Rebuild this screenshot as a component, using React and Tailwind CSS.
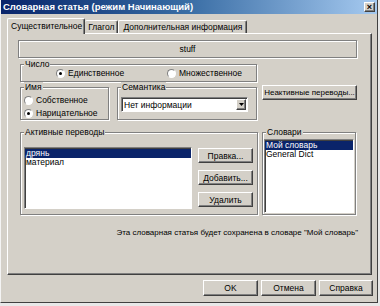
import React from "react";

const raised =
  "border border-t-white border-l-white border-r-[#404040] border-b-[#404040] shadow-[inset_-1px_-1px_0_#808080] bg-[#d4d0c8]";
const sunken =
  "border border-t-[#808080] border-l-[#808080] border-r-white border-b-white shadow-[inset_1px_1px_0_#404040] bg-white";

function Group({ label, className, children }) {
  return (
    <div
      className={`relative border border-[#808080] shadow-[inset_1px_1px_0_#fff,1px_1px_0_#fff] ${className}`}
    >
      <span className="absolute -top-[6px] left-[3px] bg-[#d4d0c8] px-[1px] text-[8.5px] leading-[10px]">
        {label}
      </span>
      {children}
    </div>
  );
}

function Radio({ label, checked, className = "" }) {
  return (
    <div className={`flex items-center gap-[3px] h-[10px] ${className}`}>
      <span className="flex items-center justify-center w-[9px] h-[9px] rounded-full border border-t-[#808080] border-l-[#808080] border-r-white border-b-white bg-white">
        {checked && <span className="w-[3px] h-[3px] rounded-full bg-black" />}
      </span>
      <span className="text-[8.5px] leading-[10px]">{label}</span>
    </div>
  );
}

function Button({ children, className }) {
  return (
    <div
      className={`flex items-center justify-center whitespace-nowrap leading-[10px] ${raised} ${className}`}
    >
      {children}
    </div>
  );
}

function ListBox({ items, className }) {
  return (
    <div className={`${sunken} pt-[1px] ${className}`}>
      {items.map((it, i) => (
        <div
          key={it}
          className={`text-[8.5px] leading-[9px] h-[9px] pl-[1px] ${
            i === 0 ? "bg-[#0a246a] text-white" : ""
          }`}
        >
          {it}
        </div>
      ))}
    </div>
  );
}

export default function App() {
  return (
    <div className="w-[380px] h-[306px] bg-[#e8e8e8] font-['Liberation_Sans',Arial,sans-serif] text-black">
      <div className="w-[378px] h-[303px] bg-[#d4d0c8] border-l border-l-[#f4f4f4] border-r border-r-[#404040] border-b border-b-[#404040] flex flex-col">
        {/* title bar */}
        <div className="h-[14px] flex items-center justify-between pl-[2px] pr-[2px] bg-gradient-to-r from-[#0a246a] via-[#3a6ea5] to-[#a6caf0]">
          <span className="text-white font-bold text-[9.5px] leading-[10px]">
            Словарная статья (режим Начинающий)
          </span>
          <span
            className={`w-[11px] h-[10px] flex items-center justify-center text-[9px] leading-[8px] font-bold ${raised}`}
          >
            ×
          </span>
        </div>

        <div className="pl-[6px] pt-[4px]">
          {/* tabs */}
          <div className="flex items-end h-[15px]">
            <div className="relative z-10 h-[16px] -mb-[1px] pl-[3px] pr-[2px] flex items-start pt-[2px] bg-[#d4d0c8] border-t border-l border-t-white border-l-white border-r border-r-[#404040] shadow-[inset_-1px_0_0_#808080] rounded-t-[2px] text-[8.5px] leading-[10px]">
              Существительное
            </div>
            <div className="h-[13px] px-[3px] flex items-start pt-[1px] border-t border-t-white border-r border-r-[#404040] shadow-[inset_-1px_0_0_#808080] rounded-t-[2px] text-[8.5px] leading-[10px]">
              Глагол
            </div>
            <div className="h-[13px] px-[4px] flex items-start pt-[1px] border-t border-l border-t-white border-l-white border-r border-r-[#404040] shadow-[inset_-1px_0_0_#808080] rounded-t-[2px] text-[8.5px] leading-[10px]">
              Дополнительная информация
            </div>
          </div>

          {/* panel */}
          <div className="w-[365px] h-[242px] border border-t-white border-l-white border-r-[#404040] border-b-[#404040] shadow-[inset_-1px_-1px_0_#808080] pl-[10px] pt-[6px]">
            <div className="w-[339px] h-[18px] border border-[#808080] shadow-[inset_1px_1px_0_#fff,1px_1px_0_#fff] flex items-center justify-center text-[8.5px] leading-[10px]">
              stuff
            </div>

            <Group label="Число" className="ml-[2px] mt-[6px] w-[237px] h-[18px] flex items-center pl-[35px]">
              <Radio label="Единственное" checked className="w-[111px]" />
              <Radio label="Множественное" />
            </Group>

            <div className="flex items-start mt-[3px]">
              <Group label="Имя" className="ml-[2px] mt-[2px] w-[89px] h-[33px] pl-[3px] pt-[7px] flex flex-col gap-[3px]">
                <Radio label="Собственное" />
                <Radio label="Нарицательное" checked />
              </Group>
              <Group label="Семантика" className="ml-[8px] mt-[2px] w-[140px] h-[33px] pl-[3px] pt-[9px]">
                <div className={`w-[127px] h-[15px] flex items-center justify-between pl-[2px] ${sunken}`}>
                  <span className="text-[8.5px] leading-[10px]">Нет информации</span>
                  <span
                    className={`w-[10px] h-[11px] flex items-center justify-center mr-[1px] ${raised}`}
                  >
                    <svg width="5" height="3" viewBox="0 0 5 3">
                      <path d="M0 0h5L2.5 3z" fill="#000" />
                    </svg>
                  </span>
                </div>
              </Group>
              <Button className="ml-[5px] w-[95px] h-[15px] text-[8px]">Неактивные переводы...</Button>
            </div>

            <div className="flex items-start mt-[12px]">
              <Group label="Активные переводы" className="ml-[2px] w-[238px] h-[83px] flex items-start pl-[3px]">
                <ListBox items={["дрянь", "материал"]} className="mt-[14px] w-[168px] h-[62px]" />
                <div className="ml-[6px] mt-[15px] flex flex-col gap-[7px]">
                  <Button className="w-[55px] h-[15px] text-[8.5px]">Правка...</Button>
                  <Button className="w-[55px] h-[15px] text-[8.5px]">Добавить...</Button>
                  <Button className="w-[55px] h-[15px] text-[8.5px]">Удалить</Button>
                </div>
              </Group>
              <Group label="Словари" className="ml-[4px] w-[94px] h-[83px] pl-[1px] pt-[6px]">
                <ListBox items={["Мой словарь", "General Dict"]} className="w-[90px] h-[74px]" />
              </Group>
            </div>

            <div className="w-[340px] mt-[13px] text-right text-[8px] leading-[10px]">
              Эта словарная статья будет сохранена в словаре "Мой словарь"
            </div>
          </div>

          {/* dialog buttons */}
          <div className="flex justify-end gap-[3px] pr-[4px] mt-[5px]">
            <Button className="w-[55px] h-[16px] text-[8.5px]">OK</Button>
            <Button className="w-[55px] h-[16px] text-[8.5px]">Отмена</Button>
            <Button className="w-[54px] h-[16px] text-[8.5px]">Справка</Button>
          </div>
        </div>
      </div>
    </div>
  );
}
